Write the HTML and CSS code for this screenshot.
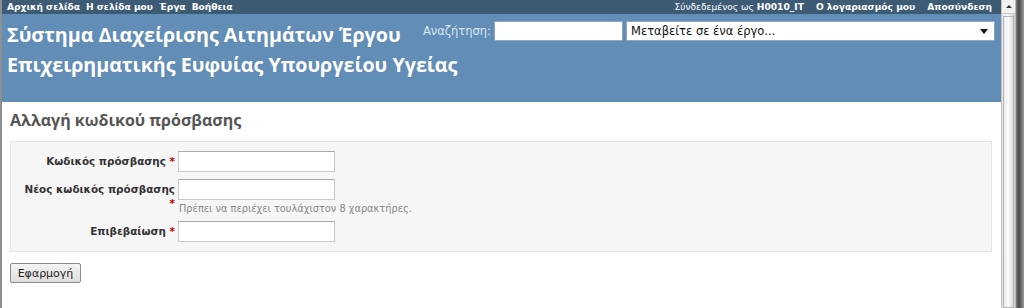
FILE: index.html
```html
<!DOCTYPE html>
<html lang="el">
<head>
<meta charset="utf-8">
<title>Αλλαγή κωδικού πρόσβασης</title>
<link rel="stylesheet" href="styles.css">
</head>
<body>
<div class="screen">
  <div class="page">
    <div class="top-menu">
      <ul class="menu-left">
        <li><a href="#">Αρχική σελίδα</a></li>
        <li><a href="#">Η σελίδα μου</a></li>
        <li><a href="#">Έργα</a></li>
        <li><a href="#">Βοήθεια</a></li>
      </ul>
      <div class="menu-right">
        <span class="logged">Σύνδεδεμένος ως <b>H0010_IT</b></span>
        <a href="#">Ο λογαριασμός μου</a>
        <a href="#">Αποσύνδεση</a>
      </div>
    </div>
    <div class="header">
      <h1 class="title">Σύστημα Διαχείρισης Αιτημάτων Έργου<br>Επιχειρηματικής Ευφυίας Υπουργείου Υγείας</h1>
      <div class="quick-search">
        <label class="search-label">Αναζήτηση:</label>
        <input class="search-input" type="text">
        <div class="jump">
          <span>Μεταβείτε σε ένα έργο...</span>
          <span class="arrow"></span>
        </div>
      </div>
    </div>
    <div class="main">
      <h2 class="heading">Αλλαγή κωδικού πρόσβασης</h2>
      <div class="box">
        <div class="row">
          <label class="label">Κωδικός πρόσβασης <span class="req">*</span></label>
          <div class="field"><input class="input" type="password"></div>
        </div>
        <div class="row">
          <label class="label">Νέος κωδικός πρόσβασης<br><span class="req">*</span></label>
          <div class="field"><input class="input" type="password"><em class="hint">Πρέπει να περιέχει τουλάχιστον 8 χαρακτήρες.</em></div>
        </div>
        <div class="row">
          <label class="label">Επιβεβαίωση <span class="req">*</span></label>
          <div class="field"><input class="input" type="password"></div>
        </div>
      </div>
      <button class="submit" type="button">Εφαρμογή</button>
    </div>
  </div>
  <div class="scrollbar">
    <div class="sb-up"><span class="sb-arrow"></span></div>
    <div class="sb-thumb"></div>
  </div>
  <div class="edge"></div>
</div>
</body>
</html>
```
FILE: styles.css
```css
* { box-sizing: border-box; }
html, body { margin: 0; padding: 0; }
body {
  font-family: "DejaVu Sans", Verdana, sans-serif;
  font-size: 12px;
  color: #333;
  background: #fff;
  width: 1024px;
  height: 308px;
  overflow: hidden;
}
.screen { display: flex; height: 308px; }
.page {
  width: 1001px;
  flex-shrink: 0;
  border-left: 2px solid #8d8f92;
  display: flex;
  flex-direction: column;
  background: #fff;
}
.top-menu {
  height: 14px;
  flex-shrink: 0;
  background: #3e5b76;
  color: #fff;
  font-size: 9.1px;
  font-weight: bold;
  display: flex;
  justify-content: space-between;
  align-items: center;
  padding: 0 9px 0 5px;
}
.top-menu a { color: #fff; text-decoration: none; }
.menu-left { list-style: none; margin: 0; padding: 0; display: flex; gap: 6px; }
.menu-right { display: flex; gap: 12px; }
.logged { font-weight: normal; }
.logged b { font-weight: bold; }
.header {
  height: 88px;
  flex-shrink: 0;
  background: #628db6;
  display: flex;
  align-items: flex-start;
  padding: 6px 6px 0 5px;
}
.title {
  margin: 0;
  width: 400px;
  flex-shrink: 0;
  color: #fff;
  font-family: "Open Sans", sans-serif;
  font-size: 19.7px;
  font-weight: bold;
  line-height: 30px;
  white-space: nowrap;
}
.quick-search { display: flex; align-items: center; gap: 3px; margin-top: 1px; margin-left: auto; }
.search-label { color: #dde7f1; font-size: 11.5px; }
.search-input {
  width: 129px;
  height: 20px;
  border: 1px solid #8aa9c8;
  background: #fff;
  margin: 0;
}
.jump {
  width: 369px;
  height: 20px;
  background: #fff;
  border: 1px solid #8aa9c8;
  display: flex;
  justify-content: space-between;
  align-items: center;
  padding: 0 6px 0 4px;
  font-size: 11.5px;
  color: #111;
}
.arrow {
  width: 0; height: 0;
  border-left: 4px solid transparent;
  border-right: 4px solid transparent;
  border-top: 5px solid #111;
}
.main { padding: 6px 8px 0 8px; }
.heading {
  margin: 0 0 9px 0;
  font-family: "Open Sans", sans-serif;
  font-size: 16px;
  font-weight: bold;
  color: #555;
  height: 24px;
  line-height: 24px;
}
.box {
  background: #f6f6f6;
  border: 1px solid #e4e4e4;
  padding: 9px 0 9px 0;
  display: flex;
  flex-direction: column;
  gap: 7px;
  margin-bottom: 11px;
  width: 982px;
}
.row { display: flex; align-items: flex-start; }
.label {
  width: 164px;
  text-align: right;
  font-weight: bold;
  font-size: 10.4px;
  color: #333;
  line-height: 14px;
  padding-top: 3px;
}
.req { color: #bb0000; }
.field { display: flex; flex-direction: column; padding-left: 3px; }
.input {
  width: 157px;
  height: 21px;
  margin: 0;
  border: 1px solid #c8c8c8;
  border-top-color: #a9a9a9;
  background: #fff;
}
.hint {
  font-style: normal;
  font-size: 9.8px;
  color: #888;
  margin-top: 3px;
  padding-left: 1px;
}
.submit {
  width: 71px;
  height: 20px;
  font-family: "DejaVu Sans", sans-serif;
  font-size: 11px;
  color: #222;
  border: 1px solid #8c8c8c;
  border-radius: 2px;
  background: linear-gradient(#f4f4f4, #dedede);
  padding: 0;
  margin: 0;
}
.scrollbar {
  width: 15px;
  flex-shrink: 0;
  background: linear-gradient(to right, #e4e4e4, #f8f8f8 40%, #d2d2d2);
  border-left: 1px solid #c4c4c4;
  border-right: 1px solid #b8b8b8;
  display: flex;
  flex-direction: column;
}
.sb-up {
  height: 14px;
  display: flex;
  align-items: center;
  justify-content: center;
  background: #f2f2f2;
  border-bottom: 1px solid #c8c8c8;
}
.sb-arrow {
  width: 0; height: 0;
  border-left: 3px solid transparent;
  border-right: 3px solid transparent;
  border-bottom: 3px solid #333;
}
.sb-thumb {
  flex: 1;
  margin: 2px 1px 0 1px;
  border: 1px solid #b4b4b4;
  background: linear-gradient(to right, #ececec, #fafafa 50%, #dcdcdc);
}
.edge {
  flex: 1;
  background: linear-gradient(to right, #7a7a7a, #4a4a4a 40%, #9a9a9a);
}
```
